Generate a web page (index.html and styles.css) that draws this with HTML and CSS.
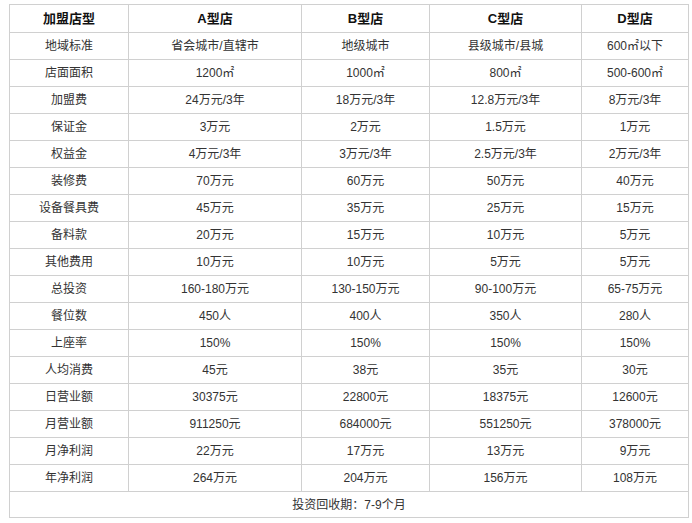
FILE: index.html
```html
<!DOCTYPE html>
<html lang="zh">
<head>
<meta charset="utf-8">
<link rel="stylesheet" href="styles.css">
</head>
<body>
<table class="fee">
<colgroup>
<col class="c1"><col class="c2"><col class="c3"><col class="c4"><col class="c5">
</colgroup>
<thead>
<tr class="head"><th>加盟店型</th><th>A型店</th><th>B型店</th><th>C型店</th><th>D型店</th></tr>
</thead>
<tbody>
<tr><td>地域标准</td><td>省会城市/直辖市</td><td>地级城市</td><td>县级城市/县城</td><td>600㎡以下</td></tr>
<tr><td>店面面积</td><td>1200㎡</td><td>1000㎡</td><td>800㎡</td><td>500-600㎡</td></tr>
<tr><td>加盟费</td><td>24万元/3年</td><td>18万元/3年</td><td>12.8万元/3年</td><td>8万元/3年</td></tr>
<tr><td>保证金</td><td>3万元</td><td>2万元</td><td>1.5万元</td><td>1万元</td></tr>
<tr><td>权益金</td><td>4万元/3年</td><td>3万元/3年</td><td>2.5万元/3年</td><td>2万元/3年</td></tr>
<tr><td>装修费</td><td>70万元</td><td>60万元</td><td>50万元</td><td>40万元</td></tr>
<tr><td>设备餐具费</td><td>45万元</td><td>35万元</td><td>25万元</td><td>15万元</td></tr>
<tr><td>备料款</td><td>20万元</td><td>15万元</td><td>10万元</td><td>5万元</td></tr>
<tr><td>其他费用</td><td>10万元</td><td>10万元</td><td>5万元</td><td>5万元</td></tr>
<tr><td>总投资</td><td>160-180万元</td><td>130-150万元</td><td>90-100万元</td><td>65-75万元</td></tr>
<tr><td>餐位数</td><td>450人</td><td>400人</td><td>350人</td><td>280人</td></tr>
<tr><td>上座率</td><td>150%</td><td>150%</td><td>150%</td><td>150%</td></tr>
<tr><td>人均消费</td><td>45元</td><td>38元</td><td>35元</td><td>30元</td></tr>
<tr><td>日营业额</td><td>30375元</td><td>22800元</td><td>18375元</td><td>12600元</td></tr>
<tr><td>月营业额</td><td>911250元</td><td>684000元</td><td>551250元</td><td>378000元</td></tr>
<tr><td>月净利润</td><td>22万元</td><td>17万元</td><td>13万元</td><td>9万元</td></tr>
<tr><td>年净利润</td><td>264万元</td><td>204万元</td><td>156万元</td><td>108万元</td></tr>
<tr class="foot"><td colspan="5">投资回收期：7-9个月</td></tr>
</tbody>
</table>
</body>
</html>
```

FILE: styles.css
```css
html, body {
  margin: 0;
  padding: 0;
  background: #fff;
}
body {
  padding: 4px 0 0 9px;
  font-family: "Liberation Sans", "Noto Sans CJK SC", sans-serif;
  font-size: 12px;
  color: #333;
}
.fee {
  border-collapse: collapse;
  table-layout: fixed;
  width: 680px;
}
.c1 { width: 119px; }
.c2 { width: 173px; }
.c3 { width: 128px; }
.c4 { width: 152px; }
.c5 { width: 107px; }
.fee th, .fee td {
  border: 1px solid #d0d0d0;
  text-align: center;
  padding: 0;
  line-height: 16px;
}
.fee td {
  height: 26px;
}
.fee th {
  height: 27px;
  font-size: 13px;
  font-weight: bold;
  color: #111;
}
.fee .foot td {
  height: 25px;
}
```
